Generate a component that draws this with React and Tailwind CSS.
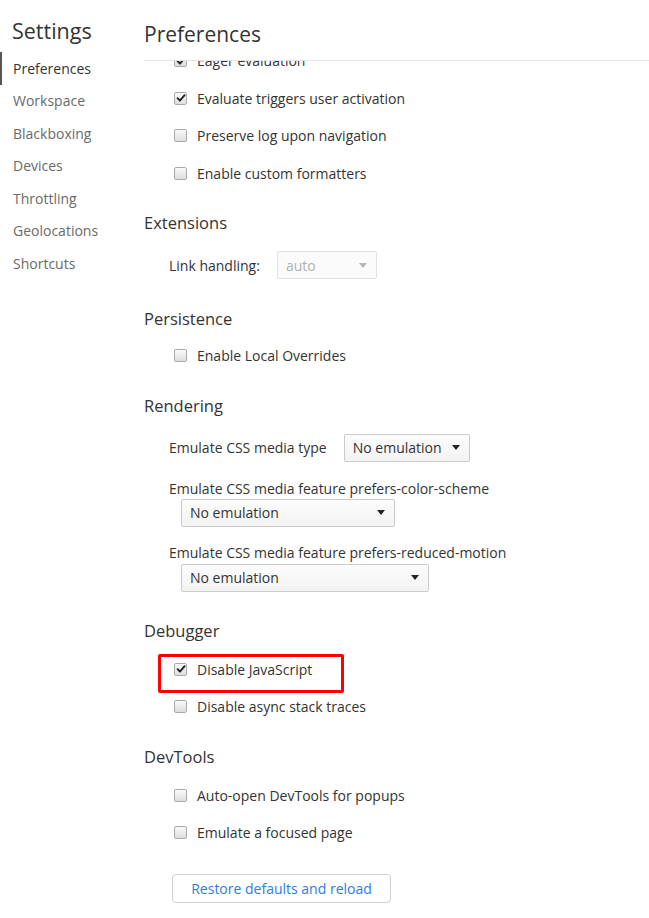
import React from "react";

const NAV = ["Preferences", "Workspace", "Blackboxing", "Devices", "Throttling", "Geolocations", "Shortcuts"];

function Checkbox({ checked }) {
  return (
    <span className="w-[13px] h-[13px] rounded-[2px] border border-[#a9a9a9] bg-gradient-to-b from-[#fafafa] to-[#dedede] flex items-center justify-center shrink-0">
      {checked && (
        <svg width="10" height="10" viewBox="0 0 10 10">
          <path d="M1.6 5.2 L3.9 7.6 L8.6 2.2" fill="none" stroke="#222" strokeWidth="1.9" strokeLinecap="round" strokeLinejoin="round" />
        </svg>
      )}
    </span>
  );
}

function CheckRow({ label, checked }) {
  return (
    <div className="h-[37.5px] flex items-center gap-[10px] pl-[30px]">
      <Checkbox checked={checked} />
      <span>{label}</span>
    </div>
  );
}

function Heading({ children, className = "" }) {
  return <div className={`h-[34px] flex items-center text-[16.5px] text-[#333] ${className}`}>{children}</div>;
}

function Select({ value, width, disabled }) {
  return (
    <div
      className={`h-[28px] rounded-[2px] border flex items-center justify-between pl-[8px] pr-[9px] shrink-0 ${
        disabled ? "border-[#e2e2e2] bg-[#fbfbfb] text-[#b0b0b0]" : "border-[#cbcbcb] bg-gradient-to-b from-[#fcfcfc] to-[#f3f3f3] text-[#333]"
      }`}
      style={{ width }}
    >
      <span>{value}</span>
      <svg width="8" height="5" viewBox="0 0 8 5">
        <path d="M0 0 H8 L4 5 Z" fill={disabled ? "#b5b5b5" : "#222"} />
      </svg>
    </div>
  );
}

export default function App() {
  return (
    <div
      className="w-[649px] h-[918px] bg-white flex overflow-hidden text-[14px] text-[#333]"
      style={{ fontFamily: '"Open Sans", "Noto Sans", sans-serif' }}
    >
      {/* Sidebar */}
      <div className="w-[144px] shrink-0 flex flex-col">
        <div className="h-[52px] flex items-center pl-[12px] pt-[10px] text-[21.5px] text-[#333]">Settings</div>
        {NAV.map((item, i) => (
          <div
            key={item}
            className={`h-[32.5px] flex items-center pl-[11px] border-l-2 ${
              i === 0 ? "border-[#555] text-[#333]" : "border-transparent text-[#6a6a6a]"
            }`}
          >
            {item}
          </div>
        ))}
      </div>

      {/* Main */}
      <div className="flex-1 flex flex-col min-w-0">
        <div className="h-[61px] flex items-center pt-[10px] text-[21px] text-[#333] border-b border-[#e4e4e4]">Preferences</div>
        <div className="flex-1 overflow-hidden">
          <div className="-mt-[19px]">
            <CheckRow label="Eager evaluation" checked />
            <CheckRow label="Evaluate triggers user activation" checked />
            <CheckRow label="Preserve log upon navigation" />
            <CheckRow label="Enable custom formatters" />

            <Heading className="mt-[14px]">Extensions</Heading>
            <div className="h-[50px] flex items-center gap-[17px] pl-[25px]">
              <span>Link handling:</span>
              <Select value="auto" width={100} disabled />
            </div>

            <Heading className="mt-[12px]">Persistence</Heading>
            <div className="mt-[1px]">
              <CheckRow label="Enable Local Overrides" />
            </div>

            <Heading className="mt-[15px]">Rendering</Heading>
            <div className="h-[48px] flex items-center gap-[17px] pl-[25px]">
              <span>Emulate CSS media type</span>
              <Select value="No emulation" width={126} />
            </div>
            <div className="h-[20px] mt-[7px] flex items-center pl-[25px]">Emulate CSS media feature prefers-color-scheme</div>
            <div className="pl-[37px]">
              <Select value="No emulation" width={214} />
            </div>
            <div className="h-[20px] mt-[16px] flex items-center pl-[25px]">Emulate CSS media feature prefers-reduced-motion</div>
            <div className="pl-[37px] mt-[1px]">
              <Select value="No emulation" width={248} />
            </div>

            <Heading className="mt-[23px]">Debugger</Heading>
            <div className="mt-[2px] relative">
              <CheckRow label="Disable JavaScript" checked />
              <div className="absolute left-[14px] top-[3px] w-[186px] h-[39px] border-[3px] border-[#ff0000] rounded-[2px]" />
            </div>
            <CheckRow label="Disable async stack traces" />

            <Heading className="mt-[15px]">DevTools</Heading>
            <div className="mt-[2px]">
              <CheckRow label="Auto-open DevTools for popups" />
              <CheckRow label="Emulate a focused page" />
            </div>

            <div className="mt-[22px] pl-[28px]">
              <button className="w-[219px] h-[29px] rounded-[4px] border border-[#cfcfcf] bg-white text-[#2b7ce9] text-[14px]">
                Restore defaults and reload
              </button>
            </div>
          </div>
        </div>
      </div>
    </div>
  );
}
